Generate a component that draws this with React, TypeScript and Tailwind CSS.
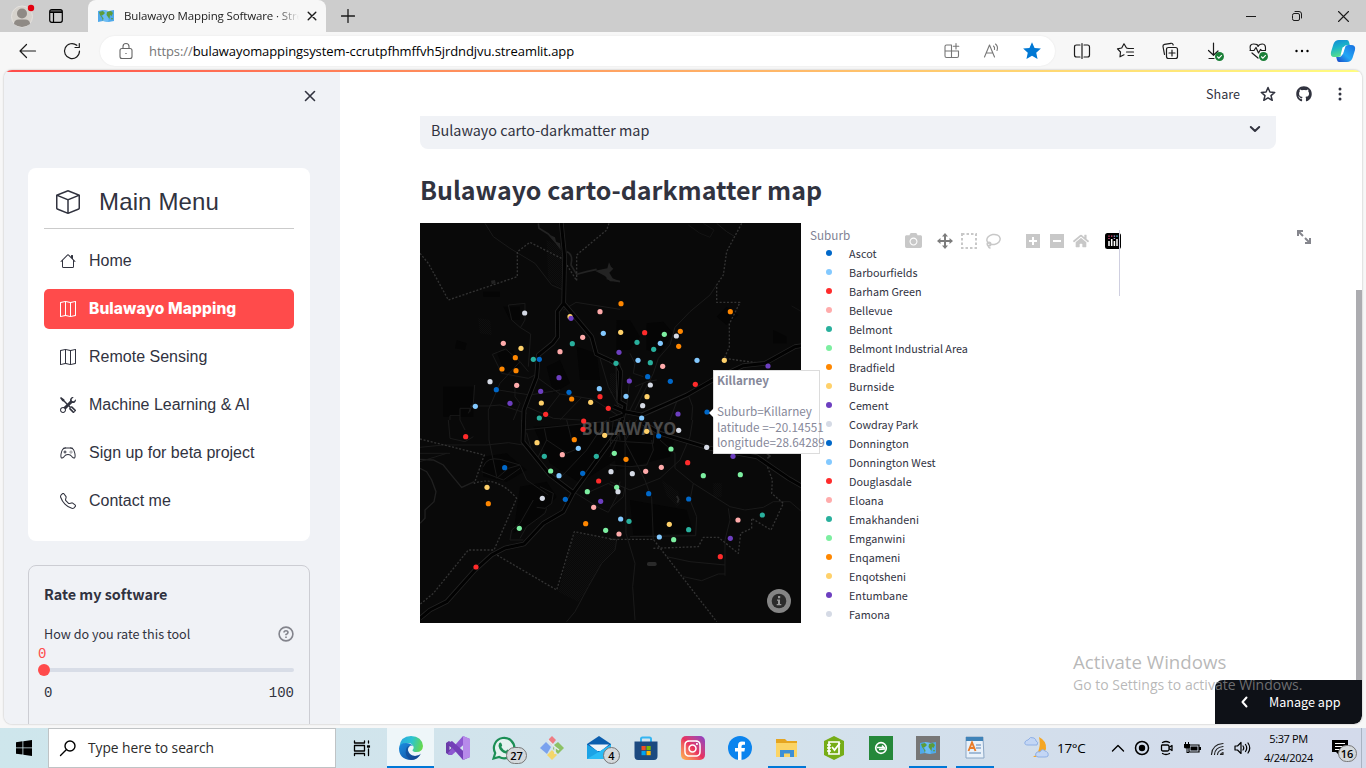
import React from "react";
import { BsBox, BsHouse, BsMap, BsTools, BsController, BsTelephone, BsThreeDotsVertical } from "react-icons/bs";
import { FaGithub, FaCamera, FaHome, FaInstagram } from "react-icons/fa";

const palette: Record<string, string> = {
  b: "#0068c9",
  l: "#83c9ff",
  r: "#ff2b2b",
  k: "#ffabab",
  t: "#29b09d",
  n: "#7defa1",
  o: "#ff8700",
  y: "#ffd16a",
  v: "#6d3fc0",
  g: "#d5dae5",
};

const suburbs: [string, string][] = [
  ["Ascot", "b"],
  ["Barbourfields", "l"],
  ["Barham Green", "r"],
  ["Bellevue", "k"],
  ["Belmont", "t"],
  ["Belmont Industrial Area", "n"],
  ["Bradfield", "o"],
  ["Burnside", "y"],
  ["Cement", "v"],
  ["Cowdray Park", "g"],
  ["Donnington", "b"],
  ["Donnington West", "l"],
  ["Douglasdale", "r"],
  ["Eloana", "k"],
  ["Emakhandeni", "t"],
  ["Emganwini", "n"],
  ["Enqameni", "o"],
  ["Enqotsheni", "y"],
  ["Entumbane", "v"],
  ["Famona", "g"],
];

type Dot = [string, number, number];

/* The map is split into four sheets, each drawn in thirds of a pixel. */
const northWest: Dot[] = [
  ["g", 314, 279], ["k", 250, 370], ["y", 303, 385], ["o", 286, 413], ["o", 246, 447], ["o", 288, 452],
  ["t", 340, 418], ["b", 358, 418], ["g", 210, 485], ["k", 290, 496], ["b", 229, 509], ["v", 270, 550],
  ["l", 166, 559], ["v", 362, 514], ["y", 364, 549], ["r", 377, 583], ["t", 358, 594], ["v", 417, 473],
  ["b", 447, 517], ["o", 455, 537], ["y", 512, 547], ["r", 540, 530], ["l", 538, 506], ["r", 565, 565],
  ["k", 420, 395], ["k", 488, 352], ["t", 457, 371], ["l", 550, 340], ["y", 450, 290], ["v", 453, 295],
  ["k", 540, 275],
];
const northEast: Dot[] = [
  ["o", 33, 251], ["o", 361, 275], ["y", 32, 337], ["r", 104, 338], ["n", 163, 343], ["o", 211, 334],
  ["g", 199, 348], ["l", 151, 370], ["t", 81, 367], ["t", 131, 388], ["o", 206, 379], ["v", 27, 397],
  ["l", 84, 421], ["t", 18, 430], ["t", 121, 428], ["k", 158, 439], ["l", 261, 421], ["y", 343, 421],
  ["v", 474, 438], ["b", 113, 470], ["v", 58, 483], ["g", 121, 495], ["b", 181, 484], ["r", 256, 493],
  ["l", 48, 529], ["y", 111, 530], ["g", 98, 557], ["l", 95, 594], ["v", 204, 582], ["b", 291, 576],
];
const southWest: Dot[] = [
  ["r", 137, 50], ["r", 491, 3], ["r", 489, 28], ["y", 351, 68], ["o", 463, 59], ["y", 554, 46],
  ["l", 475, 85], ["k", 427, 104], ["t", 373, 109], ["t", 529, 109], ["n", 583, 100], ["n", 392, 153],
  ["l", 417, 167], ["b", 254, 143], ["b", 488, 160], ["g", 573, 155], ["r", 536, 183], ["n", 502, 215],
  ["n", 590, 202], ["g", 594, 215], ["v", 542, 244], ["k", 521, 262], ["b", 436, 238], ["g", 367, 235],
  ["y", 201, 202], ["o", 205, 251], ["n", 298, 325], ["r", 168, 441], ["o", 497, 311], ["n", 557, 331],
  ["k", 597, 342],
];
const southEast: Dot[] = [
  ["y", 110, 34], ["b", 146, 48], ["g", 206, 31], ["n", 183, 87], ["o", 48, 118], ["g", 290, 82],
  ["k", 154, 142], ["k", 107, 154], ["r", 233, 128], ["g", 67, 161], ["n", 280, 167], ["v", 369, 109],
  ["n", 391, 164], ["b", 116, 221], ["b", 236, 237], ["l", 32, 297], ["t", 57, 304], ["y", 178, 313],
  ["t", 236, 329], ["k", 384, 300], ["t", 457, 285], ["l", 148, 351], ["n", 191, 359], ["v", 361, 355],
  ["r", 331, 410],
];

const T = {
  nw: "translate(0 -3) scale(.33333)",
  ne: "translate(190 -3) scale(.33333)",
  sw: "translate(0 197) scale(.33333)",
  se: "translate(190 197) scale(.33333)",
};

const Dots = ({ t, d }: { t: string; d: Dot[] }) => (
  <g transform={t}>
    {d.map(([c, x, y], i) => (
      <circle key={i} cx={x} cy={y} r="7.8" fill={palette[c]} />
    ))}
  </g>
);

const trunk = {
  nw: "M423 0L434 110L431 250L412 275L413 350L398 370L355 405L350 470L325 535L312 570L311 605M431 250L515 350L529 402L594 432L596 540",
  ne: "M0 420L22 435L32 455L27 545L45 555L36 605M10 560L45 575L95 585L230 525L305 482L400 437L465 430L555 380L575 377",
  sw: "M311 0L309 65L390 165L460 218L560 80L597 30L606 0M460 218L430 275L370 310L312 372L255 384L215 405L165 450L80 545L30 570L0 595",
  se: "M0 0L40 -15M100 10L150 40L300 85L440 110L535 175L575 198",
};
const minor = {
  nw: "M195 10L220 50L270 85L345 130L395 195L430 210M265 255L315 250V300L302 322M265 255L275 300L300 322L332 342L325 440M430 270L468 247L600 268M217 403L257 387L300 425L240 490L205 570L205 600M300 425L325 455M217 403L245 460L325 475L345 465M90 600V587H120M120 600V565H150V575M145 580L160 550L164 495M150 558H205L240 555L320 580M229 509L330 525L420 510M285 496L285 530L300 550L280 600M355 475L420 522L485 532L520 538L600 590M420 522L360 600M540 415L565 500L597 560M485 532L420 600M320 560L400 595L480 600",
  ne: "M320 10L350 35L375 50M320 195L300 225L240 275L195 322L180 375L145 415L130 460L75 570M60 400L75 430L70 460L100 470M75 500L110 485L140 480M235 525L248 560L245 600M200 545L180 600M60 470L50 560M100 490L55 580",
  sw: "M85 0L90 55L135 65L160 50M120 0L135 30M0 82L70 75L200 75L265 68L310 75M0 100H90M0 125L80 100M207 0V60L230 170M190 140Q200 110 240 118L300 135L320 180L385 225M230 175L265 145L300 135M185 155L250 180L300 145M360 200L400 220L395 250L375 265L350 262M340 240L300 310L275 330L270 360H310M300 355L320 320L375 280L380 265M373 25L380 60L440 100L475 85M310 30L600 0M380 60L350 120M320 38L340 110L395 160M460 215L540 265L565 277L590 230L600 185M415 180L500 90L560 0M590 360L585 390L545 430L505 500L465 575L440 605M510 215L565 190L600 210M440 0L455 60",
  se: "M40 0L45 65L105 180L125 235L130 360M45 0L20 60L0 110M10 0L0 80M80 0L45 65L130 70L135 0M0 185L60 210L150 175L210 120L240 50L248 0M195 145L250 190L360 260L405 270L460 262L490 245H540L575 275M250 190L240 240L260 290L257 347L60 350M355 265L360 300L345 360V467M0 135L60 140L110 135L130 90L125 60M45 70L48 340L75 430L68 500L75 600M170 410L240 425L345 435M220 470L275 482L325 462H345M60 0L45 60M0 265L40 230L45 200M150 60L195 100L195 145M0 60L45 65M25 0L30 60",
};
const border = {
  nw: "M0 100L25 130L85 240L292 170V95L330 67L430 118L470 182V105L560 30L567 10",
  ne: "M395 10L350 95L340 165L320 195V247H390L358 312V380L343 415L465 432",
  sw: "M0 57L193 105L163 190Q230 165 290 235L222 390L145 390L40 520L0 553M222 400L410 510L463 335L590 360",
  se: "M0 358H130L320 605M130 385L265 380L280 352H325L385 400L392 340L425 325V295L483 330L520 250L485 220L487 180L465 120L430 105",
};

function DarkMap() {
  const sheets = ["nw", "ne", "sw", "se"] as const;
  return (
    <svg viewBox="0 0 381 400" className="block h-[400px] w-[381px] bg-[#090909]">
      <defs>
        <pattern id="stipple" width="6" height="6" patternUnits="userSpaceOnUse">
          <circle cx="1.5" cy="1.5" r="1" fill="#242424" />
          <circle cx="4.5" cy="4.5" r="1" fill="#242424" />
        </pattern>
      </defs>
      <g transform={T.nw}>
        <path d="M380 60L425 80L432 210L385 180Z" fill="url(#stipple)" />
        <path d="M175 295L210 300L215 345L180 340Z" fill="url(#stipple)" />
        <path d="M355 10L357 25L385 42L408 68M440 95Q455 100 455 120L453 135L470 163L500 155L530 148M560 175L600 185" fill="none" stroke="#232323" strokeWidth="5" />
        <path d="M525 152L562 145L567 127L573 140L580 146L568 158L578 175L598 185L570 184L555 168ZM390 45L405 52L408 65L420 70L422 90L408 72ZM213 182L225 180L227 190L215 193Z" fill="#232323" />
        <path d="M190 215H240V230H190ZM110 360L140 370L135 390L105 385ZM250 260H300V300H270ZM230 395L280 390L300 440L255 460ZM380 440L420 420L450 490L400 520ZM470 380L530 400L540 480L480 480ZM70 500H160V590H70Z" fill="#050505" />
      </g>
      <g transform={T.ne}>
        <path d="M235 15L270 40L300 52L312 30L280 10M545 258L575 275" fill="none" stroke="#141414" strokeWidth="3" />
        <path d="M320 290L350 260L385 285L350 315ZM20 300H60L90 350L60 390H20ZM110 310L160 305L190 340L150 400L110 390ZM490 330L530 350V370H490Z" fill="#050505" />
        <path d="M0 460H25V520H0Z" fill="url(#stipple)" />
      </g>
      <g transform={T.sw}>
        <path d="M463 335L590 360L585 390L545 430L505 500L475 545L415 515Z" fill="url(#stipple)" />
        <path d="M0 118L40 120L70 135L90 160L125 202L163 185M0 145L20 155L35 180L48 215L42 245L15 270V295L0 310" fill="none" stroke="#202020" strokeWidth="4" />
        <path d="M190 110L260 100L320 150L260 185L190 170ZM300 200L380 185L410 230L350 300L280 340ZM340 20L540 10L600 110L480 190L390 130Z" fill="#050505" />
      </g>
      <g transform={T.se}>
        <path d="M155 180L205 215L212 250L200 260L170 225ZM310 190H335V230H310ZM60 75H110V120H70Z" fill="url(#stipple)" />
        <rect x="111" y="426" width="29" height="12" rx="5" fill="#2a2a2a" />
        <path d="M60 240L230 270L250 340L70 345ZM0 20L200 30L180 110L20 150Z" fill="#050505" />
        <path d="M470 100L480 108L472 115M200 228L206 238L202 248" fill="none" stroke="#2a2a2a" strokeWidth="5" />
      </g>
      {sheets.map((s) => (
        <g key={s} transform={T[s]} fill="none" strokeLinejoin="round">
          <path d={minor[s]} stroke="#1a1a1a" strokeWidth="3" />
          <path d={border[s]} stroke="#333" strokeWidth="4" strokeDasharray="6 5" />
          <path d={trunk[s]} stroke="#232323" strokeWidth="14" />
          <path d={trunk[s]} stroke="#020202" strokeWidth="9" />
        </g>
      ))}
      <text x="161.500" y="212" fontSize="17" fontWeight="700" fontFamily="Open Sans, sans-serif" fill="#4a4a4a" textLength="95" lengthAdjust="spacingAndGlyphs">
        BULAWAYO
      </text>
      <Dots t={T.nw} d={northWest} />
      <Dots t={T.ne} d={northEast} />
      <Dots t={T.sw} d={southWest} />
      <Dots t={T.se} d={southEast} />
      <circle cx="359" cy="378" r="12" fill="#858585" />
      <circle cx="359" cy="378" r="7.300" fill="#2b2b2b" />
      <path d="M357 376.500h3v4.500h1.300v1.300h-4.600V381h1.300v-3.200h-1zM358 373h2.200v2.200H358z" fill="#9a9a9a" />
    </svg>
  );
}

const Line = ({ d, s = 20, w = 1.1, c = "#1b1b1b", cls = "" }: { d: string; s?: number; w?: number; c?: string; cls?: string }) => (
  <svg viewBox={`0 0 ${s} ${s}`} width={s} height={s} fill="none" stroke={c} strokeWidth={w} strokeLinecap="round" strokeLinejoin="round" className={`shrink-0 ${cls}`}>
    <path d={d} />
  </svg>
);

const WorldMap = () => (
  <svg viewBox="0 0 16 14" width="16" height="14" className="shrink-0">
    <path d="M0 2L5 1L10.500 2L16 1V12L10.500 13L5 12L0 13Z" fill="#4fa9ea" />
    <path d="M5 1L10.500 2V13L5 12Z" fill="#6cbcf4" />
    <path d="M1 3L5 2L7 4L5 6L3.500 6L4 8L5.500 9L5 12L4 9L2 6ZM9 3L13 2L15 4L13.500 7L12 6L11.500 10L10 8L8.500 6ZM13 9L15 9L14 11Z" fill="#5d9c3a" />
  </svg>
);

function TabStrip() {
  return (
    <div className="flex h-8 shrink-0 items-center bg-[#cdcdcd]">
      <div className="flex w-[88px] items-center gap-5 pl-[11px]">
        <svg viewBox="0 0 24 24" width="24" height="24">
          <circle cx="11" cy="12.500" r="10.500" fill="#d6d2cc" stroke="#e4e1de" />
          <circle cx="11" cy="9.500" r="5" fill="#8f8a85" />
          <path d="M3 20Q3 15.500 8 15.500H14Q19 15.500 19 20Q15 23 11 23T3 20Z" fill="#8f8a85" />
          <circle cx="20" cy="4" r="3.200" fill="#e3000f" />
        </svg>
        <svg viewBox="0 0 14 14" width="14" height="14" className="-ml-1.5" fill="none" stroke="#000" strokeWidth="1.200">
          <rect x=".7" y=".7" width="12.600" height="12.600" rx="2" />
          <path d="M1 2.200H13M1 3.500H13M4.500 3V13" />
        </svg>
      </div>
      <div className="flex h-full w-[238px] items-center rounded-t-[8px] bg-[#f7f7f7] pl-[10px]">
        <WorldMap />
        <div className="ml-[10px] w-[175px] overflow-hidden whitespace-nowrap bg-gradient-to-r from-[#1b1b1b] from-86% to-[#f7f7f7] bg-clip-text font-['Open_Sans',sans-serif] text-[11.500px] leading-4 tracking-[-0.130px] text-transparent">
          Bulawayo Mapping Software · Streamlit
        </div>
        <Line s={10} d="M1.200 1.200L8.800 8.800M8.800 1.200L1.200 8.800" w={1.400} cls="ml-[8px]" />
      </div>
      <Line s={14} d="M7 .5V13.500M.5 7H13.500" w={1.300} cls="ml-[15px]" />
      <div className="ml-auto flex items-center gap-[36px] pr-[17px]">
        <Line s={10} d="M0 5.500H10" w={1} />
        <Line s={10} d="M.5 4Q.5 2.500 2 2.500H6Q7.500 2.500 7.500 4V8Q7.500 9.500 6 9.500H2Q.5 9.500 .5 8ZM3 .5H7Q9.500 .5 9.500 3V7" w={1} />
        <Line s={11} d="M.5 .5L10.500 10.500M10.500 .5L.5 10.500" w={1.100} />
      </div>
    </div>
  );
}

const Check = () => (
  <svg viewBox="0 0 10 10" width="9" height="9" className="absolute right-0 bottom-0">
    <circle cx="5" cy="5" r="5" fill="#1a7f37" />
    <path d="M2.500 5L4.300 6.800L7.500 3.500" fill="none" stroke="#fff" strokeWidth="1.200" />
  </svg>
);

function Toolbar() {
  return (
    <div className="flex h-[38px] shrink-0 items-center bg-[#f7f7f7] pl-[18px]">
      <Line d="M2 10H17.500M8.500 3.500L2 10L8.500 16.500" w={1.200} />
      <Line d="M17.500 10A7.500 7.500 0 1 1 14.800 4.300M17.300 2.500V6.500H13" w={1.200} cls="ml-[24px]" />
      <div className="ml-[18px] flex h-[30px] w-[955px] items-center rounded-full bg-white pr-[13px] pl-4 shadow-[0_0_2px_rgba(0,0,0,0.08)]">
        <Line d="M6 7.500H14Q16 7.500 16 9.500V15.500Q16 17.500 14 17.500H6Q4 17.500 4 15.500V9.500Q4 7.500 6 7.500ZM7 7.500V5.500Q7 2.500 10 2.500T13 5.500V7.500M9.800 12.500H10.200" c="#666" />
        <div className="ml-[13px] whitespace-nowrap font-['Open_Sans',sans-serif] text-[13px] leading-5 tracking-[-0.080px] text-black">
          <span className="text-[#767676]">https://</span>bulawayomappingsystem-ccrutpfhmffvh5jrdndjvu.streamlit.app
        </div>
        <div className="ml-auto flex items-center gap-5">
          <Line d="M4.500 4H9.500V16.500H4.500Q3 16.500 3 15V5.500Q3 4 4.500 4ZM3 10H16.500V15Q16.500 16.500 15 16.500H9.500M14 2.500V8M11.300 5.200H16.800" c="#777" />
          <Line d="M2.500 16L7.500 4L12.500 16M4.200 12H10.800M11.500 5Q13 6.300 12.500 8.500M13.500 3Q16.500 5.500 15 9.500" c="#777" />
          <svg viewBox="0 0 18 18" width="20" height="20"><path d="M9 1.200L11.300 6.200L17 6.800L12.800 10.500L14 16.200L9 13.300L4 16.200L5.200 10.500L1 6.800L6.700 6.200Z" fill="#0078d4" /></svg>
        </div>
      </div>
      <div className="ml-[17px] flex items-center gap-6">
        <Line d="M8 4H4.500Q2.500 4 2.500 6V14Q2.500 16 4.500 16H8M12 4H15.500Q17.500 4 17.500 6V14Q17.500 16 15.500 16H12M10 2.500V17.500" w={1.200} />
        <Line d="M12 7.300L10.500 7L8 2.800L5.700 7L1.500 7.800L4.500 11L4 15.800L8 13.800M12.500 7.500H17.500M10.500 11H17.500M12 14.500H17.500" w={1.200} />
        <Line d="M8.500 6.500H15.500Q17.500 6.500 17.500 8.500V15.500Q17.500 17.500 15.500 17.500H8.500Q6.500 17.500 6.500 15.500V8.500Q6.500 6.500 8.500 6.500ZM12 9V15M9 12H15M4.500 13.500L3 5.500Q2.700 3.800 4.500 3.400L11 2.300Q12.700 2 13.200 4" w={1.200} />
        <div className="relative h-5 w-5"><Line d="M9.500 2V14M4.500 9.500L9.500 14.300L14 10M5 17.500H10" w={1.200} /><Check /></div>
        <div className="relative h-5 w-5"><Line d="M2.500 9.500Q.8 3 5.500 3T10 5.500Q11 3 14.500 3T17.500 9M2 9.500H6L8 6.500L10.500 12L12.500 8.500L13.500 9.500H17.500M4 12L10 17" w={1.200} /><Check /></div>
        <svg viewBox="0 0 20 20" width="20" height="20"><circle cx="4.500" cy="10" r="1.200" /><circle cx="10" cy="10" r="1.200" /><circle cx="15.500" cy="10" r="1.200" /></svg>
      </div>
      <svg viewBox="0 0 26 24" width="26" height="24" className="ml-[18px] shrink-0">
        <defs>
          <linearGradient id="cpA" x1="0" y1="0" x2=".3" y2="1"><stop stopColor="#0f86d8" /><stop offset=".5" stopColor="#1bb5c8" /><stop offset="1" stopColor="#57df8c" /></linearGradient>
          <linearGradient id="cpB" x1="1" y1="0" x2="0" y2="1"><stop stopColor="#1a70e0" /><stop offset=".55" stopColor="#22a7f5" /><stop offset="1" stopColor="#1742c4" /></linearGradient>
        </defs>
        <path d="M9 1H17Q18.500 1 19 3L19.800 6H17Q14.500 6 13.500 9L12 14Q11 18 7.500 18H4Q0 18 1 13L3.500 5Q5 1 9 1Z" fill="url(#cpA)" />
        <path d="M17 23H9Q7.500 23 7 21L6.200 18H9Q11.500 18 12.500 15L14 10Q15 6 18.500 6H21Q26 6 25 11L22.500 19Q21 23 17 23Z" fill="url(#cpB)" />
        <path d="M15.500 7L12.500 8.500L10.500 16.500L13 15Z" fill="#fff" />
      </svg>
    </div>
  );
}

const menu = [
  { label: "Home", icon: <BsHouse /> },
  { label: "Bulawayo Mapping", icon: <BsMap />, active: true },
  { label: "Remote Sensing", icon: <BsMap /> },
  { label: "Machine Learning & AI", icon: <BsTools /> },
  { label: "Sign up for beta project", icon: <BsController /> },
  { label: "Contact me", icon: <BsTelephone /> },
];

function Sidebar() {
  return (
    <aside className="flex w-[336px] shrink-0 flex-col overflow-hidden bg-[#f0f2f6] pr-[30px] pl-6 text-[#31333f]">
      <div className="flex h-24 shrink-0 justify-end pt-[18px] pr-0">
        <Line s={12} d="M1.500 1.500L10.500 10.500M10.500 1.500L1.500 10.500" w={1.600} c="#31333f" cls="-mr-[6px]" />
      </div>
      <nav className="h-[373px] shrink-0 rounded-[8px] bg-white px-4 pt-3 font-['Liberation_Sans',sans-serif]">
        <div className="flex h-[49px] items-center gap-[19px] border-b border-[#cbcbcb] pb-[5px] pl-3 text-2xl">
          <BsBox className="text-[24px]" />
          <span className="tracking-[0.150px]">Main Menu</span>
        </div>
        <div className="flex flex-col gap-2 pt-3">
          {menu.map((m, i) => (
            <div
              key={i}
              className={
                m.active
                  ? "flex h-10 items-center gap-[13px] rounded-[5px] bg-[#ff4b4b] pl-4 text-base font-black text-white"
                  : "flex h-10 items-center gap-[13px] pl-4 text-base"
              }
            >
              <span className="text-base">{m.icon}</span>
              <span className={m.active ? "font-['Inter',sans-serif] text-[15.500px] font-extrabold tracking-[0.100px]" : ""}>{m.label}</span>
            </div>
          ))}
        </div>
      </nav>
      <section className="mt-6 h-[200px] shrink-0 rounded-[8px] border border-[#cccdd3] px-[15px] pt-[18px] font-['Noto_Sans_CJK_SC',sans-serif]">
        <h3 className="text-[14.400px] leading-5 font-bold">Rate my software</h3>
        <div className="mt-5 flex items-center justify-between">
          <span className="text-[12.600px] leading-5">How do you rate this tool</span>
          <svg viewBox="0 0 16 16" width="16" height="16" fill="none" stroke="#83848c" strokeWidth="1.600">
            <circle cx="8" cy="8" r="6.900" />
            <path d="M6 6.500Q6 4.700 8 4.700T10 6.400Q10 7.500 8 8.500V9.300M8 10.600V12" />
          </svg>
        </div>
        <div className="-ml-[6px] flex h-5 items-center font-['Liberation_Mono',monospace] text-[14px] text-[#ff4b4b]">0</div>
        <div className="-ml-[6px] flex h-3 items-center">
          <div className="h-3 w-3 rounded-full bg-[#ff4b4b]" />
          <div className="h-1 grow rounded-r bg-[#d8dde7]" />
        </div>
        <div className="mt-[7px] flex justify-between font-['Liberation_Mono',monospace] text-[14px] leading-5">
          <span>0</span>
          <span>100</span>
        </div>
      </section>
    </aside>
  );
}

function ModeBar() {
  return (
    <div className="absolute top-[9px] left-[485px] flex items-center text-[#c8c8c8]">
      <FaCamera size={17} className="mr-[15px]" />
      <svg viewBox="0 0 16 16" width="16" height="16" className="mr-2" fill="#7c7c7c"><path d="M8 0L11 3.500H9V7H12.500V5L16 8L12.500 11V9H9V12.500H11L8 16L5 12.500H7V9H3.500V11L0 8L3.500 5V7H7V3.500H5Z" /></svg>
      <svg viewBox="0 0 16 16" width="16" height="16" className="mr-2" fill="none" stroke="currentColor" strokeWidth="2" strokeDasharray="2.500 2"><rect x="1" y="1" width="14" height="14" /></svg>
      <svg viewBox="0 0 16 16" width="16" height="16" className="mr-[25px]" fill="none" stroke="currentColor" strokeWidth="1.500"><ellipse cx="8.500" cy="6.500" rx="6.700" ry="5" transform="rotate(-10 8.500 6.500)" /><circle cx="4" cy="11" r="1.800" /><path d="M3.500 12.500Q3 14.500 5.500 15.300" /></svg>
      <svg viewBox="0 0 14 14" width="14" height="14" className="mr-[10px]"><path d="M0 0H14V14H0Z" fill="currentColor" /><path d="M7 3V11M3 7H11" stroke="#fff" strokeWidth="2" /></svg>
      <svg viewBox="0 0 14 14" width="14" height="14" className="mr-[9px]"><path d="M0 0H14V14H0Z" fill="currentColor" /><path d="M3 7H11" stroke="#fff" strokeWidth="2" /></svg>
      <FaHome size={16} className="mr-4" />
      <svg viewBox="0 0 16 16" width="16" height="16">
        <rect width="16" height="16" rx="2.500" fill="#000" />
        <path d="M4 8V13M6.700 6V13M9.400 8V13M12 6V13" stroke="#fff" strokeWidth="1.500" />
        <path d="M3.300 5.500H4.700M3.300 3.200H4.700M6 3.200H7.400" stroke="#e0457b" strokeWidth="1.200" />
        <path d="M8.700 3.200H10.100M8.700 5.500H10.100" stroke="#b39ddb" strokeWidth="1.200" />
        <path d="M11.300 3.200H12.700" stroke="#4dd0e1" strokeWidth="1.200" />
      </svg>
    </div>
  );
}

function Chart() {
  return (
    <div className="relative flex h-[400px] font-['Noto_Sans_CJK_SC',sans-serif]">
      <DarkMap />
      <div className="pt-[3px] pl-[9px]">
        <div className="text-[11.700px] leading-[18px] text-[#7f8294]">Suburb</div>
        {suburbs.map(([name, c]) => (
          <div key={name} className="flex h-[19px] items-center gap-[17px] pl-[16px] text-[10.800px] leading-[19px] text-[#31333f]">
            <svg viewBox="0 0 6 6" width="6" height="6" className="relative -top-px"><circle cx="3" cy="3" r="3" fill={palette[c]} /></svg>
            <span className="whitespace-nowrap">{name}</span>
          </div>
        ))}
      </div>
      <ModeBar />
      <div className="absolute top-[7px] left-[699px] h-[66px] w-px bg-[#cfcfe0]" />
      <svg viewBox="0 0 16 16" width="16" height="16" className="absolute top-[6px] left-[876px]" fill="none" stroke="#85868d" strokeWidth="2">
        <path d="M2 7V2H7M2 2L7 7M14 9V14H9M14 14L9 9" />
      </svg>
      <div className="absolute top-[147px] left-[293px] h-[84px] w-[107px] border border-[#dcdcdc] bg-white pt-[1px] pl-[3px] text-[11.700px] leading-[15.600px] whitespace-nowrap text-[#868899]">
        <div className="absolute top-[37px] -left-[5px] h-0 w-0 border-y-[5px] border-r-[5px] border-y-transparent border-r-white" />
        <div className="font-bold">Killarney</div>
        <div>&nbsp;</div>
        <div>Suburb=Killarney</div>
        <div>latitude =−20.14551</div>
        <div>longitude=28.64289</div>
      </div>
    </div>
  );
}

function Main() {
  return (
    <main className="relative flex grow flex-col bg-white pl-20 font-['Noto_Sans_CJK_SC',sans-serif] text-[#31333f]">
      <header className="flex h-[44px] shrink-0 items-center justify-end gap-5 pr-[14px]">
        <span className="text-[12.600px] leading-5">Share</span>
        <svg viewBox="0 0 16 16" width="16" height="16" fill="none" stroke="#31333f" strokeWidth="1.500" strokeLinejoin="round"><path d="M8 1.500L9.900 6L14.700 6.400L11 9.600L12.200 14.300L8 11.800L3.800 14.300L5 9.600L1.300 6.400L6.100 6Z" /></svg>
        <FaGithub size={16} />
        <BsThreeDotsVertical size={16} />
      </header>
      <div className="flex h-[33px] w-[856px] shrink-0 items-start justify-between rounded-b-[8px] bg-[#f0f2f6] pt-[3px] pr-[15px] pl-[11px] text-[14.400px] leading-[22px]">
        <span>Bulawayo carto-darkmatter map</span>
        <Line s={12} d="M1.800 4L6 8L10.200 4" w={2} c="#31333f" cls="mt-1" />
      </div>
      <h2 className="mt-[23px] mb-[17px] text-[25px] leading-[34px] font-bold">Bulawayo carto-darkmatter map</h2>
      <Chart />
      <div className="absolute top-[218px] right-0 h-[400px] w-[6px] bg-[#acacb0]" />
      <button className="absolute right-0 bottom-0 flex h-[44px] w-[147px] items-center gap-[18px] rounded-tl-[8px] rounded-br-[8px] bg-[#0e1117] pl-6 text-[12.600px] text-white">
        <Line s={12} d="M7.500 1.500L3.500 6L7.500 10.500" w={2} c="#fff" />
        Manage app
      </button>
      <div className="absolute top-[577px] left-[733px] font-['Open_Sans',sans-serif] whitespace-nowrap text-[#999]/70">
        <div className="text-[18.700px] leading-[26px]">Activate Windows</div>
        <div className="text-[14px] leading-[20px]">Go to Settings to activate Windows.</div>
      </div>
    </main>
  );
}

const Badge = ({ n, cls }: { n: string; cls: string }) => (
  <span className={`absolute flex h-[17px] items-center justify-center rounded-full border border-[#777] bg-[#d3d8db] font-['Open_Sans',sans-serif] text-[11px] leading-none font-semibold text-black ${cls}`}>{n}</span>
);

function TaskIcons() {
  const slot = "relative flex h-10 w-[47px] shrink-0 items-center justify-center";
  const bar = <span className="absolute bottom-0 left-[5px] h-[2px] w-[38px] bg-[#0078d7]" />;
  return (
    <div className="flex">
      <div className={`${slot} bg-[#eef6f9]`}>
        <svg viewBox="0 0 24 24" width="24" height="24">
          <defs>
            <linearGradient id="edA" x1="0" y1=".3" x2="1" y2=".5"><stop stopColor="#2aa7e0" /><stop offset=".5" stopColor="#2cc4d0" /><stop offset="1" stopColor="#66d94c" /></linearGradient>
            <linearGradient id="edB" x1="0" y1="0" x2="1" y2="1"><stop stopColor="#1b8de0" /><stop offset="1" stopColor="#0f4a9c" /></linearGradient>
          </defs>
          <path d="M.3 11Q1.500 0 12 0Q23 .5 24 10Q23.500 16 17.500 16Q13.500 16 13.500 14Q15.500 12 14 9.500Q11 6 6 7.500Q2 9 .3 11Z" fill="url(#edA)" />
          <path d="M0 12Q1 7 7 7Q12 7 14.500 10.500Q12 8.500 10 10.500Q7.500 14 11 18Q15 21.500 21.500 18.500Q17.500 24 12 24Q0 23.500 0 12Z" fill="url(#edB)" />
          <path d="M8.800 13.500Q9 19.500 16 20Q20 19.800 22 17.500Q19 23.500 13 24Q5 22 7 13.500Q7.500 10 11.500 9.800Q9 11 8.800 13.500Z" fill="#123f86" opacity=".55" />
        </svg>
        <span className="absolute bottom-0 left-0 h-[2px] w-full bg-[#0078d7]" />
      </div>
      <div className={slot}>
        <svg viewBox="0 0 24 24" width="24" height="24"><path d="M0 7L3 5L12 12L3 19L0 17Z" fill="#6a3ba8" /><path d="M2 17L17 0L24 3L6 19L3 19Z" fill="#8d57d0" /><path d="M2 7L6 5L24 21L17 24Z" fill="#7440b8" /><path d="M17 0L24 3V21L17 24Z" fill="#b78aea" /><path d="M3.500 10L5.500 12L3.500 14Z" fill="#d8e8ee" /></svg>
      </div>
      <div className={slot}>
        <svg viewBox="0 0 24 24" width="24" height="24" className="-ml-[2px]"><path d="M1.500 22.500L3.200 17A10.200 10.200 0 1 1 7.200 21Z" fill="#e4f2f0" stroke="#1c8f56" strokeWidth="2.200" /><path d="M7 7.500Q8.500 5.500 9.500 7.500L10.200 9.500L9.300 11Q11 14 14 15L15.300 13.500L18 15Q18 18 14.500 17.800Q7.500 16 6.500 10Z" fill="#1c8f56" /></svg>
        <Badge n="27" cls="w-[21px] left-[25px] top-[19px]" />
      </div>
      <div className={slot}>
        <svg viewBox="0 0 24 24" width="24" height="24"><path d="M9 3L12 0L16 4L12 9L8.500 5Z" fill="#ef7c83" /><path d="M6 6L11 11L7 18L0 12Z" fill="#7aa2ee" /><path d="M14 9L18 6L24 12L18 18L13 13Z" fill="#8cc265" /><path d="M12 14L17 19L12 24L7 19Z" fill="#f3d66b" /><path d="M8 4L15 11V18M15 11L19 14" stroke="#e3ecef" fill="none" strokeWidth="1.500" /></svg>
      </div>
      <div className={slot}>
        <svg viewBox="0 0 24 24" width="24" height="24"><path d="M0 8L12 0L24 8V22H0Z" fill="#0c5eae" /><path d="M2 8.500H22L14 15H10Z" fill="#eef4fa" /><path d="M0 8.500L12 16L24 8.500V23H0Z" fill="#1ba3e6" /><path d="M0 23L24 8.500V23Z" fill="#2bbcf5" /></svg>
        <Badge n="4" cls="w-[17px] left-[28px] top-[19px]" />
      </div>
      <div className={slot}>
        <svg viewBox="0 0 24 24" width="24" height="24"><path d="M7 6V3Q7 1.500 8.500 1.500H15.500Q17 1.500 17 3V6" fill="none" stroke="#35b5f1" strokeWidth="2" /><path d="M.5 5.500H23.500V20Q23.500 24 20 24H4Q.5 24 .5 20Z" fill="#1c4a80" /><path d="M7.500 10H11.700V14.200H7.500Z" fill="#f25022" /><path d="M12.500 10H16.700V14.200H12.500Z" fill="#7fba00" /><path d="M7.500 15H11.700V19.200H7.500Z" fill="#00a4ef" /><path d="M12.500 15H16.700V19.200H12.500Z" fill="#ffb900" /></svg>
      </div>
      <div className={slot}>
        <div className="flex h-6 w-6 items-center justify-center rounded-[5px] bg-gradient-to-tr from-[#fdb64b] via-[#e8305f] to-[#8a3ac8] text-white"><FaInstagram size={19} /></div>
      </div>
      <div className={slot}>
        <svg viewBox="0 0 24 24" width="24" height="24"><circle cx="12" cy="12" r="12" fill="#0b84ee" /><path d="M10 24V15.500H7V12H10V9.500Q10 5.500 14 5.500L17 5.700V8.800H15Q13.500 8.800 13.500 10.300V12H17L16.400 15.500H13.500V24Z" fill="#fff" /></svg>
      </div>
      <div className={slot}>
        <svg viewBox="0 0 24 24" width="24" height="24"><path d="M1 3H10L12 5H22V19H1Z" fill="#e5a520" /><path d="M1 7H22V21H1Z" fill="#fbd465" /><path d="M5 21V14H19V21H15V17.500H9V21Z" fill="#3d8fd6" /></svg>
        {bar}
      </div>
      <div className={slot}>
        <svg viewBox="0 0 24 24" width="24" height="24"><path d="M12 0L22 5V19L12 24L2 19V5Z" fill="#76ad17" /><path d="M7 6H17V18H7ZM5 9H9M5 12H9M5 15H9" fill="none" stroke="#fff" strokeWidth="1.700" /><path d="M10 11L12.500 14L18 7" fill="none" stroke="#fff" strokeWidth="1.800" /></svg>
      </div>
      <div className={slot}>
        <svg viewBox="0 0 24 24" width="24" height="24"><path d="M0 0H24V24H0Z" fill="#25883a" /><circle cx="12" cy="12" r="5.300" fill="none" stroke="#fff" strokeWidth="1.700" /><path d="M8 11.500H15L13 9.500M16 13L10 13.500" fill="none" stroke="#fff" strokeWidth="1.500" /></svg>
      </div>
      <div className={slot}>
        <div className="flex h-6 w-6 items-center justify-center bg-[#777]"><WorldMap /></div>
        {bar}
      </div>
      <div className={slot}>
        <svg viewBox="0 0 24 24" width="24" height="24"><path d="M3 1H20L21 22H3Z" fill="#e8f1fa" stroke="#8ba6c4" /><path d="M3 1H20V5H3Z" fill="#3f83b8" /><path d="M13 9H18M13 12H18M6 17H18" stroke="#89a9cb" strokeWidth="1.500" /><path d="M5.500 15L9 6.500L12.500 15M7 12H11" stroke="#e87b28" strokeWidth="1.900" fill="none" /></svg>
        {bar}
      </div>
    </div>
  );
}

function Taskbar() {
  return (
    <div className="relative flex h-10 shrink-0 items-center bg-gradient-to-r from-[#cee6ec] via-[#d3e3ec] to-[#d3daeb] font-['Open_Sans',sans-serif]">
      <div className="flex w-12 justify-center">
        <svg viewBox="0 0 16 16" width="16" height="16"><path d="M0 2.200L6.500 1.300V7.500H0ZM7.300 1.200L16 0V7.500H7.300ZM0 8.300H6.500V14.600L0 13.700ZM7.300 8.300H16V16L7.300 14.800Z" /></svg>
      </div>
      <div className="flex h-10 w-[288px] items-center gap-[11px] border border-[#bfc3c5] bg-white pl-[10px] text-[13.800px] text-[#2b2b2b]">
        <Line s={18} d="M1.500 16.500L7 11M6 7A5 5 0 1 1 16 7A5 5 0 1 1 6 7" w={1.400} c="#000" />
        <span className="tracking-[-0.050px]">Type here to search</span>
      </div>
      <div className="flex w-[51px] justify-center">
        <Line s={18} d="M1.500 2V4H11.500V2M1.500 6.500H11.500V12H1.500ZM1.500 16.500V14.500H11.500V16.500M15.500 2V4M15.500 10V16.500M14.500 7H16.500M14.500 8H16.500" w={1.300} c="#000" />
      </div>
      <TaskIcons />
      <svg viewBox="0 0 26 24" width="26" height="24" className="ml-[26px]">
        <path d="M15 1Q23 5 22 13Q19 22 9 21Q18 15 15 1Z" fill="#f5a623" />
        <path d="M4 9Q0 9 1 6Q2 4 4 4Q6 0 10 2Q12 3 12 5Q15 6 13 9Z" fill="#c3d6f5" stroke="#8fb0e6" />
        <path d="M14 21Q10 20 12 17Q14 15 16 16Q18 12 21 15Q25 16 24 20Q23 21 21 21Z" fill="#c3d6f5" stroke="#8fb0e6" />
      </svg>
      <span className="ml-[7px] text-[13.500px] text-black tracking-[-0.300px]">17°C</span>
      <div className="ml-[25px] flex items-center gap-[9px]">
        <Line s={14} d="M1.500 10L7 4.500L12.500 10" w={1.400} c="#000" />
        <svg viewBox="0 0 16 16" width="16" height="16"><circle cx="8" cy="8" r="6.500" fill="none" stroke="#000" strokeWidth="1.500" /><circle cx="8" cy="8" r="3.200" /></svg>
        <Line s={16} d="M3 5H8.500Q10 5 10 6.500V9.500Q10 11 8.500 11H4Q2.500 11 2.500 9.500V6Q2.500 5 3 5ZM10 7.500L13 5.500V10.500L10 8.500M3.500 2.500Q7 .5 10.500 2.500M3.500 13.500Q7 15.500 10.500 13.500" w={1.300} c="#000" />
        <svg viewBox="0 0 17 16" width="17" height="16"><path d="M5 5H15V12H5Z" fill="none" stroke="#000" strokeWidth="1.200" /><path d="M6.500 6.500H13.500V10.500H6.500ZM15 7H17V10H15ZM0 4H6V7.500Q6 8.500 3 8.500T0 7.500ZM1 2H2V4H1ZM4 2H5V4H4ZM2.500 8H3.500V12H5V13H2.500Z" /></svg>
        <Line s={15} d="M1.500 13.500Q2 3.500 13 2.500M4.500 13.500Q5 6.500 13 5.500M7.500 13.500Q8 9.500 13 8.500M10.500 13.500Q11 12 13 11.500V13.500Z" w={1.200} c="#222" />
        <Line s={18} d="M1 7H3.500L7 3.500V14.500L3.500 11H1ZM9 7Q10.500 9 9 11M11.500 5.500Q14 9 11.500 12.500M14 4Q17.500 9 14 14" w={1.200} c="#000" />
      </div>
      <div className="ml-[5px] w-[64px] text-center text-[11px] leading-[19px] tracking-[-0.350px] text-black">
        <div>5:37 PM</div>
        <div>4/24/2024</div>
      </div>
      <div className="relative ml-[11px] h-[18px] w-4">
        <svg viewBox="0 0 16 16" width="16" height="16"><path d="M0 1H16V13H7V16L4 13H0Z" /><path d="M3 4.500H13M3 7.500H13M3 10.500H8" stroke="#fff" strokeWidth="1.200" /></svg>
        <Badge n="16" cls="w-[19px] left-[6px] top-[6px]" />
      </div>
      <div className="absolute top-0 right-1 h-10 w-px bg-[#a9b3c2]" />
    </div>
  );
}

export default function App() {
  return (
    <div className="flex h-[768px] w-[1366px] flex-col overflow-hidden bg-[#f7f7f7]">
      <TabStrip />
      <Toolbar />
      <div className="mx-1 flex h-[654px] shrink-0 flex-col overflow-hidden rounded-[8px] shadow-[0_0_2px_rgba(0,0,0,0.3)]">
        <div className="h-[2px] shrink-0 bg-gradient-to-r from-[#ff4b4b] to-[#fffd80]" />
        <div className="flex h-[652px]">
          <Sidebar />
          <Main />
        </div>
      </div>
      <div className="h-1 shrink-0" />
      <Taskbar />
    </div>
  );
}
